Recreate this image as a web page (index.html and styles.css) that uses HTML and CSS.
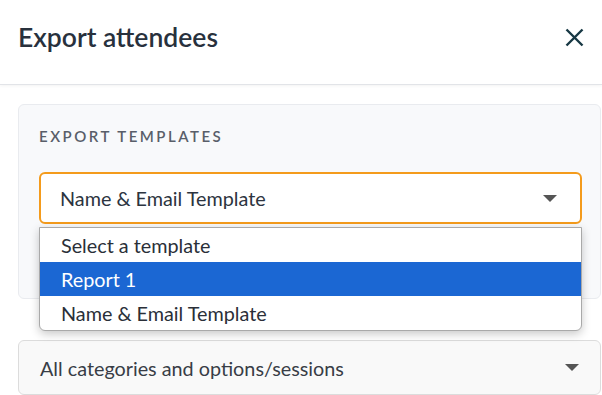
FILE: index.html
```html
<!DOCTYPE html>
<html>
<head>
    <meta charset="utf-8" />
    <title>Export attendees</title>
    <link rel="stylesheet" href="styles.css">
</head>
<body>
    <div class="modal">
        <div class="modal-header">
            <h1>Export attendees</h1>
            <button class="close" aria-label="Close">
                <svg width="19" height="19" viewBox="0 0 19 19">
                    <path d="M1.5 1.5 L17.5 17.5 M17.5 1.5 L1.5 17.5" stroke="#173844" stroke-width="2.4" fill="none" />
                </svg>
            </button>
        </div>

        <div class="modal-body">
            <div class="panel">
                <div class="label">Export templates</div>
                <div class="select-wrap">
                    <div class="select focused">
                        <span>Name &amp; Email Template</span>
                        <span class="caret"></span>
                    </div>
                    <ul class="options">
                        <li>Select a template</li>
                        <li class="active">Report 1</li>
                        <li>Name &amp; Email Template</li>
                    </ul>
                </div>
                <div class="danger-btn"></div>
            </div>

            <div class="select plain">
                <span>All categories and options/sessions</span>
                <span class="caret"></span>
            </div>
        </div>
    </div>
</body>
</html>
```

FILE: styles.css
```css
body {
    margin: 0;
    font-family: Lato, "Open Sans", sans-serif;
    background: #ffffff;
    color: #2c3440;
}
.modal {
    width: 602px;
    height: 395px;
    overflow: hidden;
}
.modal-header {
    height: 85px;
    display: flex;
    align-items: center;
    justify-content: space-between;
    padding: 0 18px;
    border-bottom: 1px solid #e2e4e8;
    box-shadow: 0 1px 3px rgba(0,0,0,0.05);
    box-sizing: border-box;
}
.modal-header h1 {
    margin: 0 0 11px 0;
    font-size: 26.5px;
    font-weight: 600;
    color: #28313d;
}
.close {
    background: none;
    border: none;
    padding: 0;
    margin: 0 0 10px 0;
    display: flex;
}
.modal-body {
    padding: 19px 1px 0 18px;
}
.panel {
    background: #f8f9fb;
    border: 1px solid #e9ebef;
    border-radius: 6px;
    padding: 22px 18px 26px 20px;
}
.label {
    font-size: 15px;
    font-weight: 600;
    letter-spacing: 2.5px;
    text-transform: uppercase;
    color: #595e69;
    line-height: 18px;
    margin-bottom: 27px;
}
.select-wrap {
    position: relative;
}
.select {
    display: flex;
    align-items: center;
    justify-content: space-between;
    font-size: 19.8px;
    box-sizing: border-box;
    border-radius: 6px;
}
.select.focused {
    height: 52px;
    background: #ffffff;
    border: 2px solid #f49b1c;
    padding: 0 23px 0 19px;
}
.select.plain {
    height: 55px;
    margin-top: 41px;
    background: #f9f9f9;
    border: 1px solid #dcdcdc;
    padding: 0 21px 0 21px;
    color: #383d46;
}
.caret {
    width: 0;
    height: 0;
    border-left: 7px solid transparent;
    border-right: 7px solid transparent;
    border-top: 7px solid #555555;
}
.options {
    position: absolute;
    top: 55px;
    left: 0;
    right: 0;
    margin: 0;
    padding: 0;
    list-style: none;
    background: #ffffff;
    border: 1px solid #a9a9a9;
    border-radius: 0 0 6px 6px;
    box-shadow: 0 3px 10px rgba(0,0,0,0.22);
    z-index: 2;
}
.options li {
    height: 34px;
    line-height: 34px;
    padding: 0 21px;
    font-size: 19.8px;
    color: #2a2f38;
}
.options li.active {
    background: #1b67d3;
    color: #ffffff;
}
.danger-btn {
    height: 36px;
    margin-top: 12px;
    background: #c0392b;
    border-radius: 4px;
}
```
